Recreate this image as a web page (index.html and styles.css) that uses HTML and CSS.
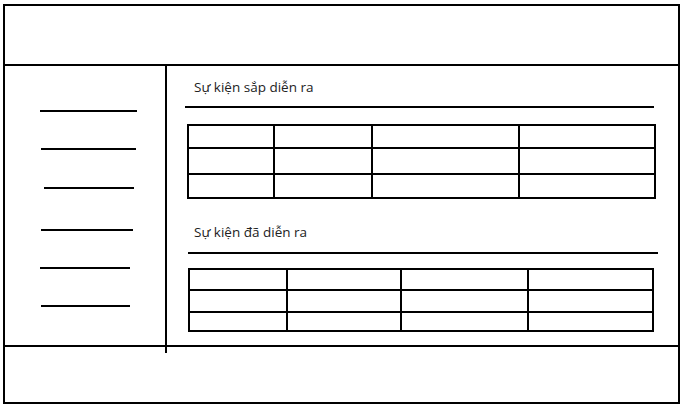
FILE: index.html
```html
<!DOCTYPE html>
<html lang="vi">

<head>
    <meta charset="UTF-8">
    <meta name="viewport" content="width=device-width, initial-scale=1.0">
    <title>Sự kiện</title>

    <link rel="stylesheet" href="styles.css">
</head>

<body>
    <!-- wireframe: header, sidebar + content, footer -->
    <div class="frame">
        <div class="header"></div>

        <div class="middle">
            <!-- menu items are just placeholder lines -->
            <div class="sidebar">
                <span class="menu-line"></span>
                <span class="menu-line"></span>
                <span class="menu-line"></span>
                <span class="menu-line"></span>
                <span class="menu-line"></span>
                <span class="menu-line"></span>
            </div>

            <div class="content">
                <div class="section upcoming">
                    <div class="section-title">Sự kiện sắp diễn ra</div>
                    <table class="events">
                        <tr><td></td><td></td><td></td><td></td></tr>
                        <tr><td></td><td></td><td></td><td></td></tr>
                        <tr><td></td><td></td><td></td><td></td></tr>
                    </table>
                </div>

                <div class="section past">
                    <div class="section-title">Sự kiện đã diễn ra</div>
                    <table class="events">
                        <tr><td></td><td></td><td></td><td></td></tr>
                        <tr><td></td><td></td><td></td><td></td></tr>
                        <tr><td></td><td></td><td></td><td></td></tr>
                    </table>
                </div>
            </div>
        </div>

        <div class="footer"></div>
    </div>
</body>

</html>
```

FILE: styles.css
```css
/* root styles */
body, html {
    margin: 0;
    background: #fff;
    font-family: "Open Sans", "Noto Sans", sans-serif;
}

/* the outer box of the wireframe */
.frame {
    box-sizing: border-box;
    width: 677px;
    height: 400px;
    margin: 4px 0 0 3px;
    border: solid 2px #000;
    display: flex;
    flex-direction: column;
}

.header {
    height: 58px;
    border-bottom: solid 2px #000;
}

.middle {
    height: 279px;
    display: flex;
    border-bottom: solid 2px #000;
}

.footer {
    flex: 1;
}

/* sidebar with the menu placeholder lines */
.sidebar {
    position: relative;
    width: 160px;
    border-right: solid 2px #000;
    display: flex;
    flex-direction: column;
    gap: 36px;
    padding-top: 44px;
}
/* the divider was drawn a bit too long, it pokes out under the footer line */
.sidebar::after {
    content: "";
    position: absolute;
    right: -2px;
    bottom: -8px;
    width: 2px;
    height: 8px;
    background: #000;
}
.menu-line {
    display: block;
    height: 2px;
    background: #000;
    margin-left: 35px;
    width: 97px;
}
.menu-line:nth-child(2) { margin-left: 36px; width: 95px; }
.menu-line:nth-child(3) { margin-left: 39px; width: 90px; margin-top: 1px; }
.menu-line:nth-child(4) { margin-left: 36px; width: 92px; margin-top: 4px; }
.menu-line:nth-child(5) { margin-left: 35px; width: 90px; }
.menu-line:nth-child(6) { margin-left: 36px; width: 89px; }

/* main content */
.content {
    flex: 1;
    padding-top: 12px;
}

.section-title {
    font-size: 13.5px;
    line-height: 18px;
    color: #222;
    padding: 0 0 10px 9px;
    border-bottom: solid 2px #000;
}

.upcoming .section-title {
    margin-left: 18px;
    width: 460px;
}
.past .section-title {
    margin-left: 21px;
    padding: 0 0 11px 6px;
    width: 464px;
}

.past {
    margin-top: 24px;
}

/* the empty tables */
.events {
    border-collapse: collapse;
    border: solid 2px #000;
}
.events td {
    border: solid 2px #000;
    padding: 0;
}

.upcoming .events {
    margin: 16px 0 0 20px;
}
.upcoming .events tr:nth-child(1) td { height: 21px; }
.upcoming .events tr:nth-child(2) td { height: 24px; }
.upcoming .events tr:nth-child(3) td { height: 22px; }
.upcoming .events td:nth-child(1) { width: 84px; }
.upcoming .events td:nth-child(2) { width: 96px; }
.upcoming .events td:nth-child(3) { width: 145px; }
.upcoming .events td:nth-child(4) { width: 134px; }

.past .events {
    margin: 14px 0 0 21px;
}
.past .events tr:nth-child(1) td { height: 19px; }
.past .events tr:nth-child(2) td { height: 20px; }
.past .events tr:nth-child(3) td { height: 17px; }
.past .events td:nth-child(1) { width: 96px; }
.past .events td:nth-child(2) { width: 112px; }
.past .events td:nth-child(3) { width: 125px; }
.past .events td:nth-child(4) { width: 123px; }
```
